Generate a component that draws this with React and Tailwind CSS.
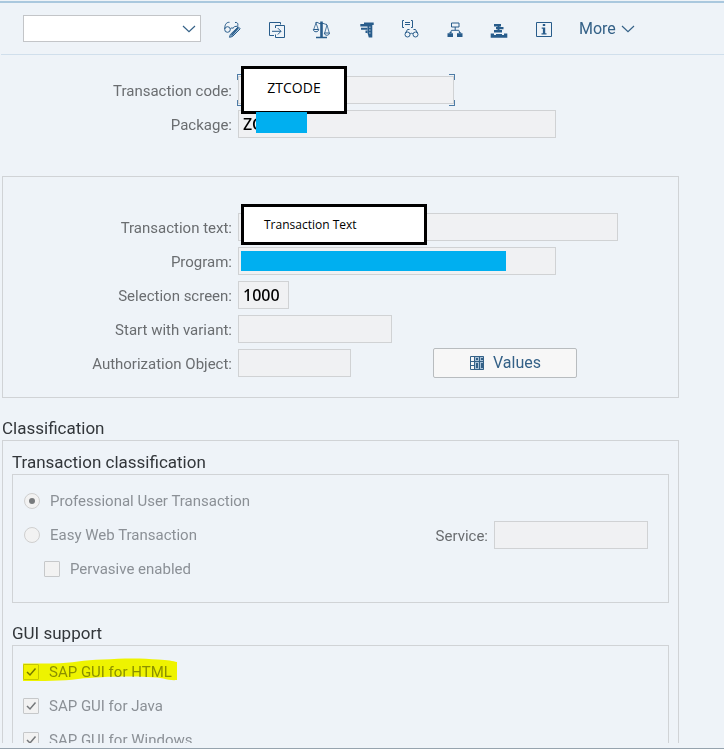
import React from "react";

const FIELD = "h-7 border border-[#d0d2d4] bg-[#f0f1f3] px-1 font-['Noto_Sans',sans-serif] text-base font-medium text-black outline-none";
const ROW = "flex h-7 items-center gap-[6px]";
const LABEL = "w-[229px] shrink-0 whitespace-nowrap pt-[2px] text-right text-[#6a6d70]";
const HEADING = "text-[17px] leading-5 text-[#32363a]";
const OPTION = "flex h-[34px] items-center gap-[10px] whitespace-nowrap text-[#8b9096]";

function GlassesPencil() {
  return (
    <>
      <circle cx="6.5" cy="11.5" r="2.8" />
      <path d="M3.700 11C3.700 7.500 4.800 4 8.500 4.300M9.300 11.200C10 9.700 11.300 9.500 12 10.500M12 10.500C12.300 8.600 14.500 8.200 16.500 8.300C17.300 6.500 17 4 14 4.500" />
      <path d="M17.200 8.800L19.200 10.800L11.500 18.500L8.500 19.300L9.300 16.500Z" fill="#b7cfe2" />
      <path d="M17.200 9.800L10.500 17.500" strokeWidth="1.600" />
    </>
  );
}

function Transfer() {
  return (
    <>
      <path d="M14.500 6.500V4.500H3.500V17.500H8" />
      <path d="M9.500 10V7.500H18.500V19.500H9.500V16.500" />
      <path d="M6 13.300H15M11.800 10.100L15 13.300L11.800 16.500" />
    </>
  );
}

function Scales() {
  return (
    <>
      <path d="M11.500 3.500V19" strokeWidth="2.600" />
      <path d="M6 19.500H17" strokeWidth="1.500" />
      <path d="M5.500 4.500C8 3.500 9 6.500 11.500 5.500C14 5 15 6.500 17 6.500" />
      <path d="M6 5L3.700 11.500M6 5L8.300 11.500M17 7L14.700 15M17 7L19.300 15" strokeWidth="0.800" />
      <path d="M3.300 11.500H8.700C8.500 14.500 3.500 14.500 3.300 11.500ZM14.300 15H19.500C19.200 18 14.500 18 14.300 15Z" />
    </>
  );
}

function Caliper() {
  return (
    <g fill="currentColor" stroke="none">
      <path d="M9 4.500H18.700V7H17.300V19.500H13.800L12.500 15V8.500H5.300V6H9Z" />
      <path d="M6 9.800H12.500V11.800H6ZM10.500 12.500H12.500V15H10.500Z" />
      <path d="M14.500 8.500H15.300V10H14.500ZM14.500 11.300H15.300V12.800H14.500ZM14.500 14.200H15.300V15.700H14.500Z" fill="#eef3f8" />
    </g>
  );
}

function ListGlasses() {
  return (
    <>
      <path d="M5 2.500H3.500V9.500H5M12 2.500H13.500V9.500H12" />
      <path d="M6 4.500H11M6 6.500H11" />
      <circle cx="8.500" cy="16.500" r="2.500" />
      <circle cx="16.500" cy="16.500" r="2.500" />
      <path d="M11 16C11.500 15 13.500 15 14 16M6.500 15L8.500 11.500H10.500M18.500 15L16.500 11.500H14.500" />
    </>
  );
}

function Hierarchy() {
  return (
    <>
      <path d="M7.500 5H15V9H7.500ZM11.200 9V12.300M6.200 15.500L7.500 12.300H14.800L16.200 15.500" />
      <path d="M3.500 15.300H9V19H3.500ZM13 15.300H18.500V19H13Z" fill="currentColor" stroke="none" />
      <path d="M4.500 15L7 13.800L8 15ZM14.500 15L15.500 13.800L17.500 15Z" fill="currentColor" stroke="none" />
    </>
  );
}

function StackedBars() {
  return (
    <g fill="currentColor" stroke="none">
      <path d="M6 6H13V8.500H6ZM8 9H15.500V11.300H8ZM6 12H14V14.500H6ZM2.700 15.500H6V17H8V16H14V17H16V15.500H19.300V19.700H2.700Z" />
      <path d="M9.500 8H11.500V13H9.500Z" />
    </g>
  );
}

function Info() {
  return (
    <>
      <path d="M3.500 4.500H18.500V18.500H3.500Z" />
      <path d="M9.800 6H12.200V8H9.800ZM8.700 9.500H12.200V15.300H13.500V16.500H8.500V15.300H9.900V10.700H8.700Z" fill="currentColor" stroke="none" />
    </>
  );
}

const TOOLS = [
  ["Display / Change", GlassesPencil],
  ["Other object", Transfer],
  ["Compare", Scales],
  ["Check", Caliper],
  ["Where-used list", ListGlasses],
  ["Display object list", Hierarchy],
  ["Navigation stack", StackedBars],
  ["Information", Info],
];

function Chevron() {
  return (
    <svg width="14" height="8" viewBox="0 0 14 8" fill="none" stroke="#346187" strokeWidth="1.2" className="pointer-events-none shrink-0">
      <path d="M1 1L7 6.700L13 1" />
    </svg>
  );
}

function Toolbar() {
  return (
    <header className="flex h-[52px] shrink-0 items-center border-b border-[#d0dfec] pl-[22px]">
      <div className="grid w-[178px] items-center">
        <select aria-label="Command" className="col-start-1 row-start-1 h-[27px] w-full appearance-none border border-[#c3c5c8] bg-white px-2 outline-none" />
        <div className="pointer-events-none col-start-1 row-start-1 flex justify-end pr-[5px]">
          <Chevron />
        </div>
      </div>
      <div className="ml-5 flex w-[334px] shrink-0 items-center justify-between">
        {TOOLS.map(([name, Icon]) => (
          <button key={name} aria-label={name} className="size-[22px] text-[#285c8b]">
            <svg width="22" height="22" viewBox="0 0 22 22" fill="none" stroke="currentColor" strokeWidth="1">
              <Icon />
            </svg>
          </button>
        ))}
      </div>
      <button className="ml-6 flex items-center gap-[5px] text-base leading-5 text-[#346187]">
        More
        <Chevron />
      </button>
    </header>
  );
}

function Field({ id, label, value = "", width, children }) {
  return (
    <div className={ROW}>
      <label htmlFor={id} className={LABEL}>{label}</label>
      <div className="relative flex">
        <input id={id} readOnly defaultValue={value} className={`${FIELD} ${width}`} />
        {children}
      </div>
    </div>
  );
}

function FocusCorners() {
  return (
    <div className="pointer-events-none absolute -inset-x-px -inset-y-[2px]">
      <i className="absolute left-0 top-0 size-[6px] border-l border-t border-[#4d7ba6]" />
      <i className="absolute right-0 top-0 size-[6px] border-r border-t border-[#4d7ba6]" />
      <i className="absolute bottom-0 left-0 size-[6px] border-b border-l border-[#4d7ba6]" />
      <i className="absolute bottom-0 right-0 size-[6px] border-b border-r border-[#4d7ba6]" />
    </div>
  );
}

function Check({ id, label, checked = false }) {
  return (
    <div className={OPTION}>
      <span className="grid size-4 place-items-center">
        <input id={id} type="checkbox" disabled defaultChecked={checked} className="col-start-1 row-start-1 size-4 appearance-none rounded-[1px] border border-[#c6c8ca] bg-[#f2f2f2]" />
        {checked && (
          <svg width="12" height="12" viewBox="0 0 12 12" fill="none" stroke="#75787b" strokeWidth="1.500" className="col-start-1 row-start-1">
            <path d="M2 6L5 9L10.500 2.500" />
          </svg>
        )}
      </span>
      <label htmlFor={id}>{label}</label>
    </div>
  );
}

function Radio({ id, label, checked = false }) {
  return (
    <div className={OPTION}>
      <span className="grid size-4 place-items-center">
        <input id={id} name="classification" type="radio" disabled defaultChecked={checked} className="col-start-1 row-start-1 size-4 appearance-none rounded-full border border-[#cfcfcf] bg-[#f2f2f2]" />
        {checked && <span className="col-start-1 row-start-1 size-[6px] rounded-full bg-[#777a7d]" />}
      </span>
      <label htmlFor={id}>{label}</label>
    </div>
  );
}

export default function App() {
  return (
    <div className="flex h-screen flex-col overflow-hidden border-b border-[#96a3ae] bg-[#eef3f8] pt-px pb-[5px] font-[Roboto,sans-serif] text-[15px] leading-5">
      <div className="flex min-h-0 grow flex-col border-t-2 border-[#aac8de] pl-px">
        <Toolbar />
        <main className="min-h-0 grow overflow-hidden pl-px pr-[45px]">
          <section className="mt-[21px] flex flex-col gap-[6px] pl-px">
            <Field id="tcode" label="Transaction code:" width="w-[216px]">
              <FocusCorners />
              <div className="absolute -top-[10px] left-[3px] z-10 flex h-12 w-[106px] items-center justify-center border-[3px] border-black bg-white pb-1 font-['Open_Sans',sans-serif] text-sm text-black">
                ZTCODE
              </div>
            </Field>
            <Field id="package" label="Package:" value="ZC" width="w-[318px]">
              <div className="absolute left-[18px] top-[2px] z-20 h-[21px] w-[51px] bg-[#00aff0]" />
            </Field>
          </section>

          <section className="mt-[38px] flex flex-col gap-[6px] border border-[#d0d3d6] pb-5 pt-9">
            <Field id="ttext" label="Transaction text:" width="w-[380px]">
              <div className="absolute -top-[9px] left-[3px] z-10 flex h-[41px] w-[186px] items-center border-[3px] border-black bg-white pl-5 pt-px font-['Open_Sans',sans-serif] text-xs text-black">
                Transaction Text
              </div>
            </Field>
            <Field id="program" label="Program:" width="w-[318px]">
              <div className="absolute left-[3px] top-1 z-10 h-5 w-[265px] bg-[#00aff0]" />
            </Field>
            <Field id="screen" label="Selection screen:" value="1000" width="w-[51px]" />
            <Field id="variant" label="Start with variant:" width="w-[154px]" />
            <div className="flex h-7 items-center gap-[82px]">
              <Field id="auth" label="Authorization Object:" width="w-[113px]" />
              <button className="flex h-[30px] w-36 items-center justify-center gap-2 rounded-[2px] border border-[#b8bcbf] bg-[#f7f7f7] text-base leading-5 text-[#346187]">
                <svg width="16" height="16" viewBox="0 0 16 16" fill="none" stroke="#346187" strokeWidth="1">
                  <path d="M6 1H15V15H6Z" fill="#a9c2d8" stroke="none" />
                  <path d="M1.500 1.500H14.500V14.500H1.500ZM5.500 1V15M10.500 1V15M1 6.500H15M1 10.500H5" />
                  <path d="M7 8H9V13H7ZM12 8H14V13H12ZM7 3H9V5H7ZM12 3H14V5H12Z" fill="#346187" stroke="none" />
                </svg>
                Values
              </button>
            </div>
          </section>

          <h2 className={`${HEADING} mt-5`}>Classification</h2>
          <section className="mt-[2px] border border-[#d0d3d6] px-[9px] pb-5 pt-[11px]">
            <h3 className={HEADING}>Transaction classification</h3>
            <div className="mt-[2px] flex items-start justify-between border border-[#d0d3d6] pb-4 pl-[11px] pr-5 pt-[9px]">
              <div>
                <Radio id="professional" label="Professional User Transaction" checked />
                <Radio id="easyweb" label="Easy Web Transaction" />
                <div className="pl-5">
                  <Check id="pervasive" label="Pervasive enabled" />
                </div>
              </div>
              <div className="mt-[37px] flex items-center gap-[6px]">
                <label htmlFor="service" className="pt-[2px] text-[#6a6d70]">Service:</label>
                <input id="service" readOnly className={`${FIELD} w-[154px]`} />
              </div>
            </div>

            <h3 className={`${HEADING} mt-5`}>GUI support</h3>
            <div className="relative mt-[2px] border border-[#d0d3d6] pb-4 pl-[10px] pt-[9px]">
              <Check id="html" label="SAP GUI for HTML" checked />
              <Check id="java" label="SAP GUI for Java" checked />
              <Check id="windows" label="SAP GUI for Windows" checked />
              <svg width="155" height="24" viewBox="0 0 155 24" className="pointer-events-none absolute left-[10px] top-3 mix-blend-multiply">
                <path d="M0 5.500L30 5.500C50 5 60 2 80 1.500C100 0 120 0 135 1.500C145 2 150 3 154 4V22C145 23 140 19 125 19C100 18 75 19 55 21C40 23 20 23 0 23Z" fill="#ffff00" />
              </svg>
            </div>
          </section>
        </main>
      </div>
    </div>
  );
}
